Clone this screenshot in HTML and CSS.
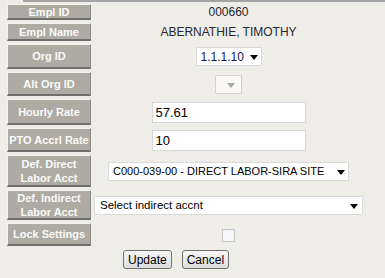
FILE: index.html
```html
<!DOCTYPE html>
<html lang="en">
<head>
  <meta charset="UTF-8">
  <meta name="viewport" content="width=device-width, initial-scale=1.0">
  <title>Employee Settings</title>
  <link rel="stylesheet" href="styles.css">
</head>
<body>
  <div class="frame-top"></div>
  <form class="empl-form">
    <div class="label">Empl ID</div>
    <div class="value">000660</div>

    <div class="label">Empl Name</div>
    <div class="value">ABERNATHIE, TIMOTHY</div>

    <div class="label">Org ID</div>
    <div class="value">
      <span class="dropdown org">
        <select><option>1.1.1.10</option></select>
        <svg class="arrow" width="8" height="5" viewBox="0 0 8 5"><path d="M0 0h8L4 5z" fill="#000"/></svg>
      </span>
    </div>

    <div class="label">Alt Org ID</div>
    <div class="value">
      <span class="dropdown alt">
        <select disabled><option></option></select>
        <svg class="arrow" width="8" height="5" viewBox="0 0 8 5"><path d="M0 0h8L4 5z" fill="#a8a8a8"/></svg>
      </span>
    </div>

    <div class="label">Hourly Rate</div>
    <div class="value"><input class="rate" type="text" value="57.61"></div>

    <div class="label">PTO Accrl Rate</div>
    <div class="value"><input class="rate" type="text" value="10"></div>

    <div class="label">Def. Direct<br>Labor Acct</div>
    <div class="value">
      <span class="dropdown direct">
        <select><option>C000-039-00 - DIRECT LABOR-SIRA SITE</option></select>
        <svg class="arrow" width="8" height="5" viewBox="0 0 8 5"><path d="M0 0h8L4 5z" fill="#000"/></svg>
      </span>
    </div>

    <div class="label">Def. Indirect<br>Labor Acct</div>
    <div class="value">
      <span class="dropdown indirect">
        <select><option>Select indirect accnt</option></select>
        <svg class="arrow" width="8" height="5" viewBox="0 0 8 5"><path d="M0 0h8L4 5z" fill="#000"/></svg>
      </span>
    </div>

    <div class="label">Lock Settings</div>
    <div class="value"><input class="lock" type="checkbox" disabled></div>

    <div class="actions">
      <button type="button">Update</button>
      <button type="button">Cancel</button>
    </div>
  </form>
</body>
</html>
```

FILE: styles.css
```css
body {
  margin: 0;
  background: #efede7;
  font-family: 'Liberation Sans', Arial, sans-serif;
}
.frame-top {
  margin-left: 23px;
  height: 2px;
  background: #a4a4a4;
}
.empl-form {
  display: grid;
  grid-template-columns: 84px 271px;
  grid-template-rows: 16px 18px 25px 24px 26px 24px 32px 30px 23px 21px;
  column-gap: 2px;
  row-gap: 3px;
  margin: 2px 0 0 7px;
}
.label {
  box-sizing: border-box;
  display: flex;
  align-items: center;
  justify-content: center;
  text-align: center;
  background: #aeaba2;
  border: 1px solid;
  border-color: #f4f4f2 #8a8a86 #6f6f6c #f4f4f2;
  border-bottom-width: 2px;
  color: #fafafa;
  font-size: 11px;
  font-weight: bold;
  line-height: 14px;
  white-space: nowrap;
}
.value {
  display: flex;
  align-items: center;
  justify-content: center;
  color: #262633;
  font-size: 12px;
}
.dropdown {
  position: relative;
  display: inline-block;
}
.dropdown select {
  appearance: none;
  -webkit-appearance: none;
  box-sizing: border-box;
  height: 19px;
  margin: 0;
  padding: 0 14px 0 4px;
  background: #fff;
  border: 1px solid #d9d9d9;
  border-radius: 1px;
  font-family: 'Liberation Sans', Arial, sans-serif;
  font-size: 11px;
  color: #000;
}
.dropdown .arrow {
  position: absolute;
  top: 8px;
  right: 5px;
  pointer-events: none;
}
.org select {
  width: 66px;
  font-size: 12px;
  color: #14145a;
}
.org .arrow {
  right: 4px;
}
.alt select {
  width: 27px;
  border-color: #c4c4c4;
  background: #fff;
}
.alt .arrow {
  right: 7px;
}
.direct select {
  width: 241px;
}
.direct .arrow {
  right: 4px;
}
.indirect select {
  width: 269px;
  padding-left: 5px;
  font-size: 11.5px;
}
.rate {
  box-sizing: border-box;
  width: 154px;
  height: 21px;
  margin: 0;
  padding: 0 3px;
  border: 1px solid #d6d6d6;
  background: #fff;
  font-family: 'Liberation Sans', Arial, sans-serif;
  font-size: 13px;
  color: #000;
}
.lock {
  appearance: none;
  -webkit-appearance: none;
  width: 13px;
  height: 13px;
  margin: 2px 0 0;
  border: 1px solid #c6c6c6;
  background: #f6f6f6;
}
.actions {
  grid-column: 1 / -1;
  display: flex;
  align-items: center;
  gap: 10px;
  padding-left: 116px;
}
button {
  box-sizing: border-box;
  height: 19px;
  padding: 0 4px;
  border: 1px solid #707070;
  border-radius: 3px;
  background: linear-gradient(#f6f6f6, #dddddd);
  font-family: 'Liberation Sans', Arial, sans-serif;
  font-size: 12px;
  color: #000;
}
```
